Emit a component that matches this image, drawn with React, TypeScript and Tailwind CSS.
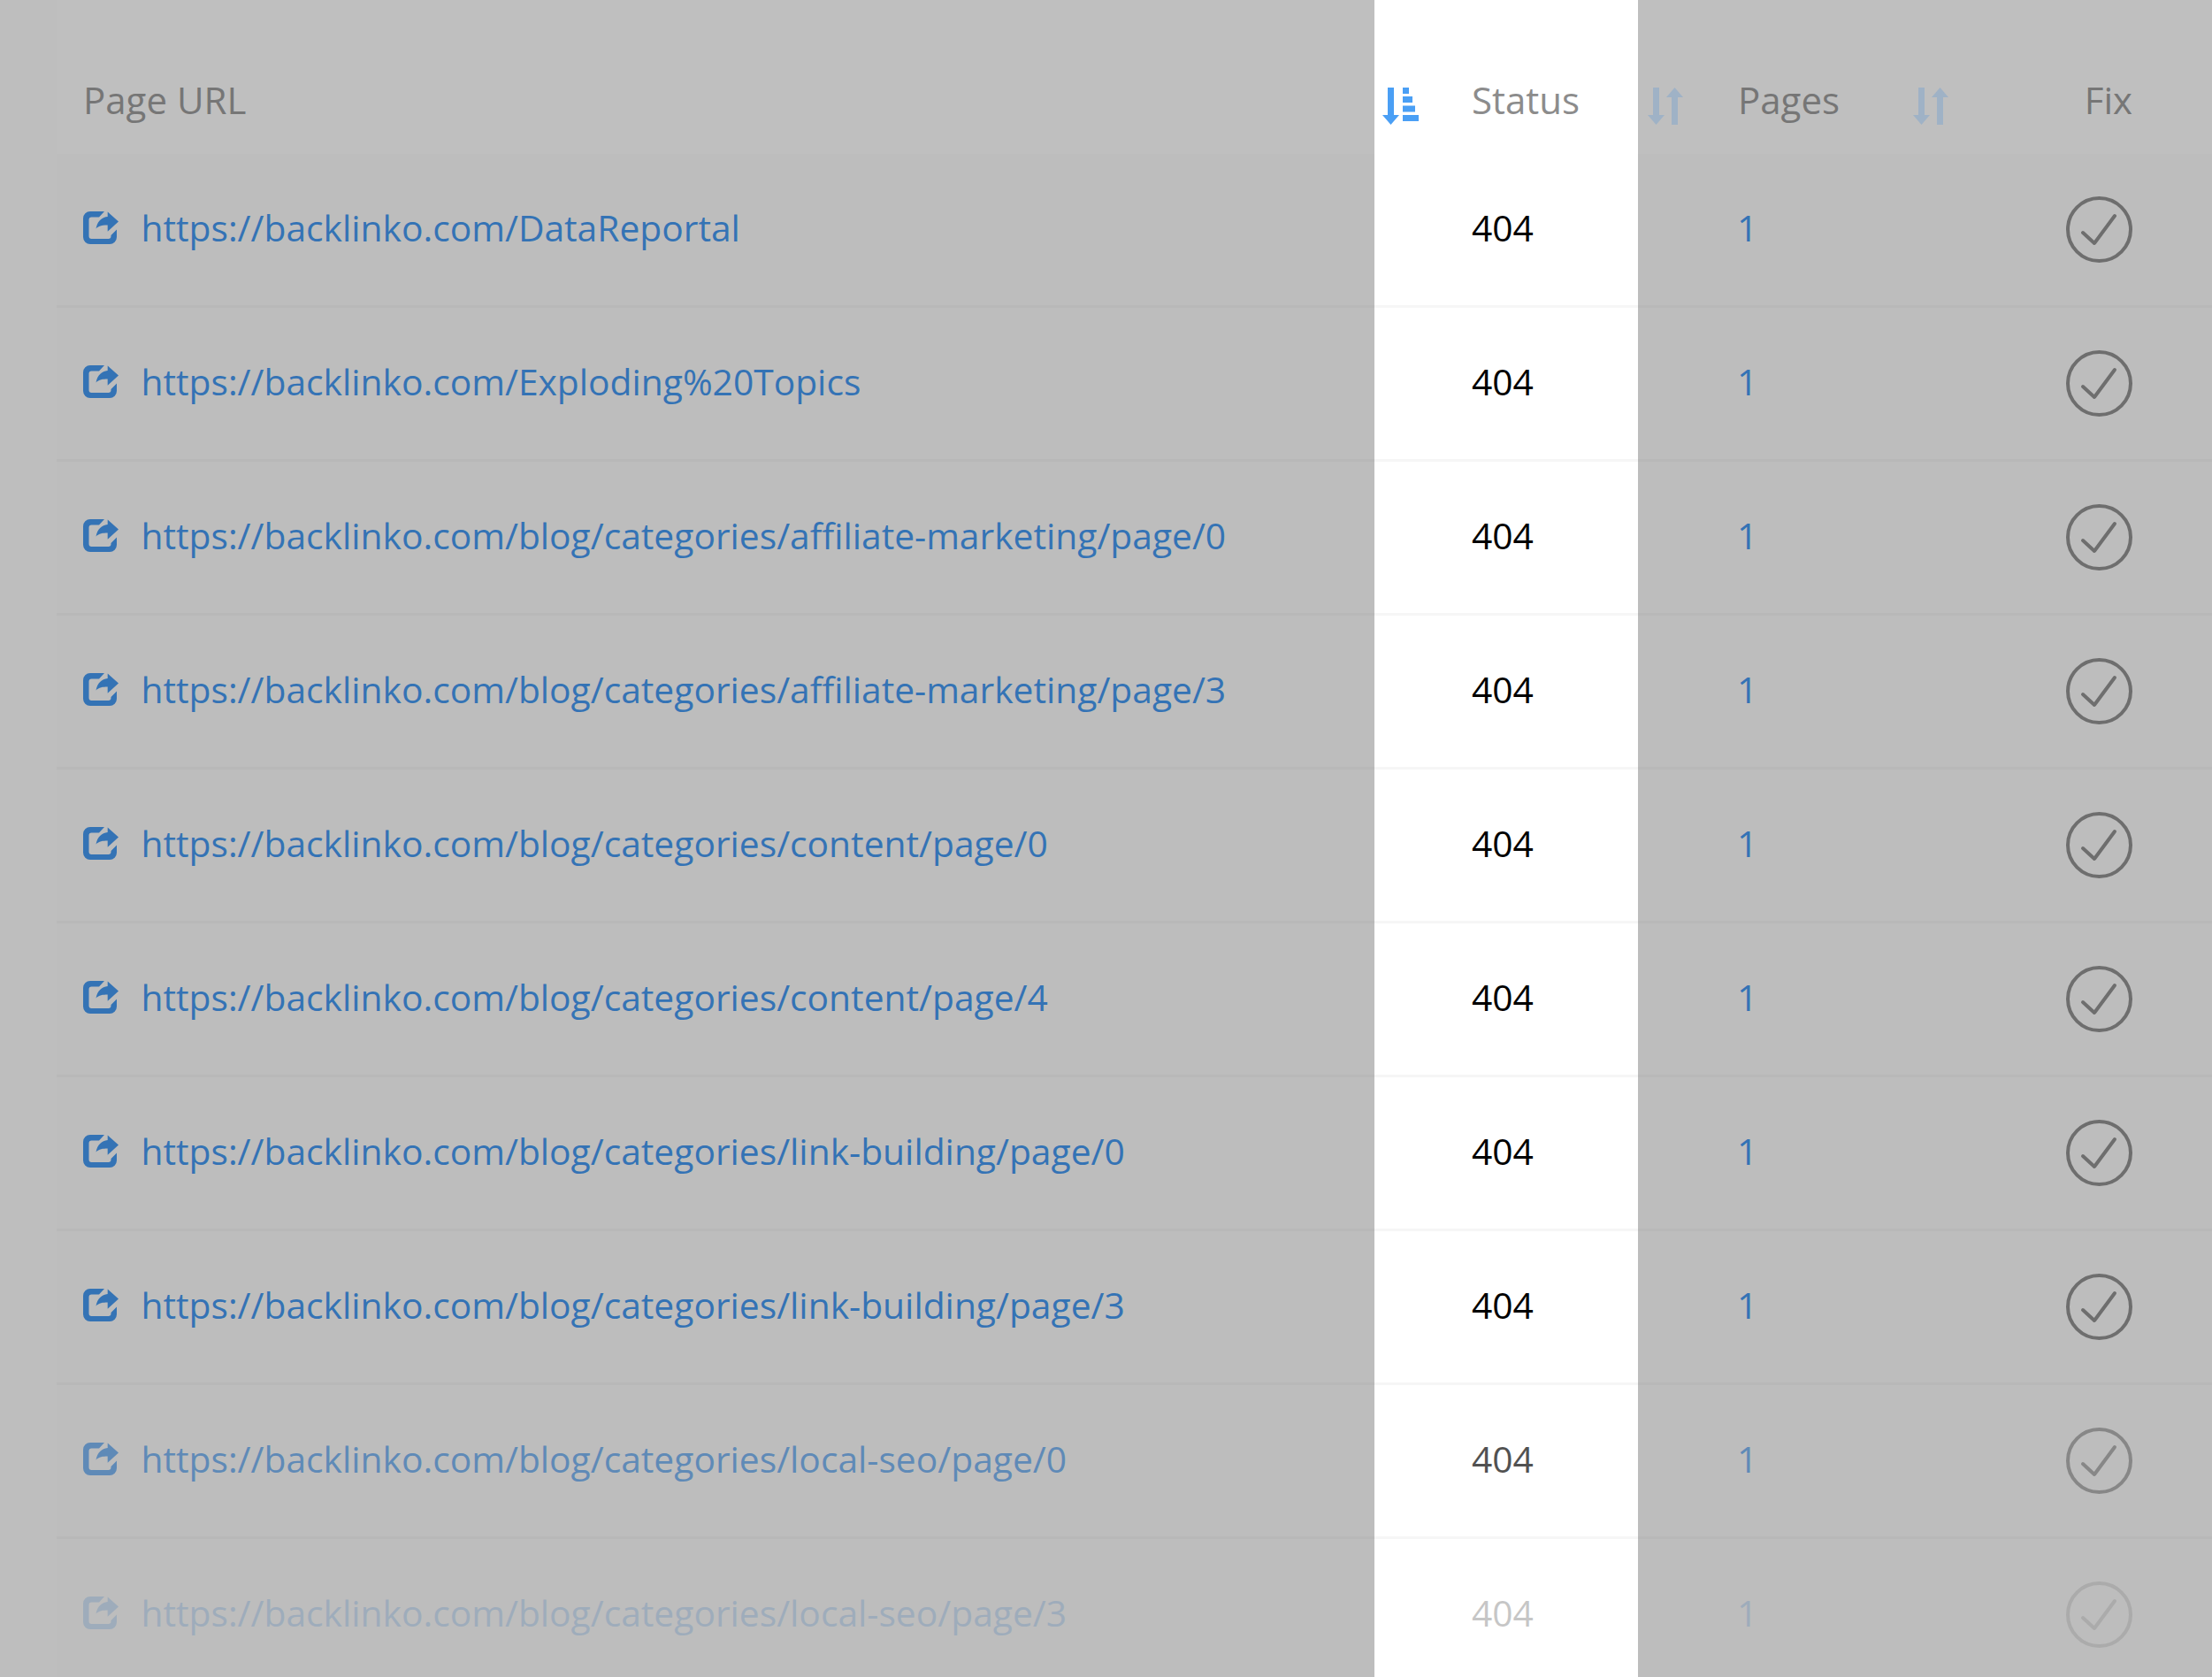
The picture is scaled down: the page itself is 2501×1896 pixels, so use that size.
const urls = [
  "https://backlinko.com/DataReportal",
  "https://backlinko.com/Exploding%20Topics",
  "https://backlinko.com/blog/categories/affiliate-marketing/page/0",
  "https://backlinko.com/blog/categories/affiliate-marketing/page/3",
  "https://backlinko.com/blog/categories/content/page/0",
  "https://backlinko.com/blog/categories/content/page/4",
  "https://backlinko.com/blog/categories/link-building/page/0",
  "https://backlinko.com/blog/categories/link-building/page/3",
  "https://backlinko.com/blog/categories/local-seo/page/0",
  "https://backlinko.com/blog/categories/local-seo/page/3",
];

function SortActive() {
  return (
    <svg width="44" height="42" viewBox="0 0 44 42" className="shrink-0 text-[#4a9ff5]" fill="currentColor">
      <path d="M6 0H13V31H19L9.5 42L0 31H6Z" />
      <rect x="23" y="0" width="7" height="7" />
      <rect x="23" y="10" width="11" height="7" />
      <rect x="23" y="20.5" width="14" height="7" />
      <rect x="23" y="31" width="18" height="7" />
    </svg>
  );
}

function SortIdle() {
  return (
    <svg width="40" height="42" viewBox="0 0 40 42" className="shrink-0 text-[#9fb2c6]" fill="currentColor">
      <path d="M6 0H13V31H19L9.5 42L0 31H6Z" />
      <path d="M27 42H34V11H40L30.5 0L21 11H27Z" />
    </svg>
  );
}

function ShareIcon() {
  return (
    <svg width="40" height="37" viewBox="0 0 40 37" className="shrink-0 text-[#3473b5]" fill="currentColor">
      <path d="M8 0H24L18 6.5H9.5A3 3 0 0 0 6.5 9.5V28A3 3 0 0 0 9.5 31H28.5A3 3 0 0 0 31.5 28V27L38 20.5V29A8 8 0 0 1 30 37H8A8 8 0 0 1 0 29V8A8 8 0 0 1 8 0Z" />
      <path d="M27.7 0.5L40 11.5L27.7 22.7V15.5C22 15.5 18 16 14.5 19.5C16 11.5 21 6.5 27.7 6Z" />
    </svg>
  );
}

function CheckCircle() {
  return (
    <svg width="75" height="75" viewBox="0 0 75 75" fill="none" className="shrink-0 text-[#6e6e6e]" stroke="currentColor">
      <circle cx="37.5" cy="37.5" r="35.5" strokeWidth="4" />
      <path d="M19 41L32 53L55 22" strokeWidth="4" strokeLinecap="round" strokeLinejoin="round" />
    </svg>
  );
}

const rowFade = ["", "", "", "", "", "", "", "", "opacity-[0.68]", "opacity-[0.22]"];

export default function App() {
  return (
    <div className="h-[1896px] w-full overflow-hidden bg-[#bebebe] font-['Open_Sans',sans-serif] text-[40.75px] leading-[56px]">
      <div className="ml-[64px] grid h-[174px] grid-cols-[1490px_298px_298px_1fr] bg-[#bfbfbf] text-[42px]">
        <div className="pl-[30px] pt-[85px] text-[#767676]">Page URL</div>
        <div className="flex bg-white pl-[9px] pt-[85px]">
          <div className="mt-[14px]"><SortActive /></div>
          <span className="ml-[57px] text-[#8c8c8c]">Status</span>
        </div>
        <div className="flex pl-[11px] pt-[85px]">
          <div className="mt-[14px]"><SortIdle /></div>
          <span className="ml-[62px] text-[#767676]">Pages</span>
        </div>
        <div className="flex justify-between pl-[13px] pr-[90px] pt-[85px]">
          <div className="mt-[14px]"><SortIdle /></div>
          <span className="text-[#767676]">Fix</span>
        </div>
      </div>
      {urls.map((url, i) => (
        <div
          key={url}
          className="ml-[64px] grid h-[174px] grid-cols-[1490px_298px_298px_1fr] bg-[#bdbdbd]"
        >
          <div className="flex items-center border-b-[3px] border-[#b8b8b8] pb-[5px] pl-[30px]">
            <div className={`flex items-center gap-[25.5px] ${rowFade[i]}`}>
              <ShareIcon />
              <span className="whitespace-nowrap text-[#3473b5]">{url}</span>
            </div>
          </div>
          <div className="flex items-center border-b-[3px] border-[#f6f6f6] bg-white pb-[5px] pl-[110px]">
            <span className={`text-black ${rowFade[i]}`}>404</span>
          </div>
          <div className="flex items-center border-b-[3px] border-[#b8b8b8] pb-[5px] pl-[112px]">
            <span className={`text-[#3473b5] ${rowFade[i]}`}>1</span>
          </div>
          <div className="flex items-center justify-end border-b-[3px] border-[#b8b8b8] pr-[90px]">
            <div className={rowFade[i]}><CheckCircle /></div>
          </div>
        </div>
      ))}
    </div>
  );
}
